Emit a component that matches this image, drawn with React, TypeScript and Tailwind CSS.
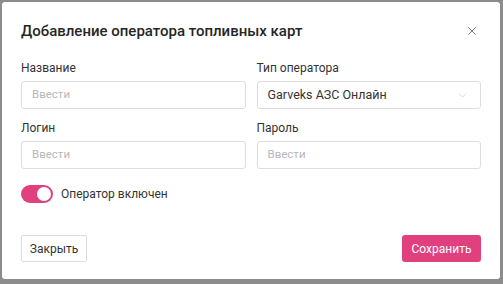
import { X, ChevronDown } from 'lucide-react'

const font = { fontFamily: 'Roboto, "Noto Sans", sans-serif' }

function Field({ label, placeholder, value, select }: { label: string; placeholder?: string; value?: string; select?: boolean }) {
  return (
    <div className="flex flex-col">
      <label className="text-[12px] leading-[18px] text-[#333333]">{label}</label>
      <div className="mt-[4px] h-[28px] rounded-[3px] border border-[#dedede] bg-white flex items-center justify-between pl-[10px] pr-[11px]">
        {value ? (
          <span className="text-[12.5px] text-[#333333]">{value}</span>
        ) : (
          <span className="text-[11.5px] text-[#b8b8b8]">{placeholder}</span>
        )}
        {select && <ChevronDown size={13} strokeWidth={1.1} className="text-[#bdbdbd]" />}
      </div>
    </div>
  )
}

export default function App() {
  return (
    <div className="w-[503px] h-[284px] bg-[#8c8c8c] pt-[2px] pl-[2px]" style={font}>
      <div className="w-[498px] h-[277px] bg-white rounded-[3px] px-[19px]">
        <div className="pt-[19px] flex items-center justify-between">
          <h2 className="text-[15px] leading-[20px] font-medium text-[#262626]">Добавление оператора топливных карт</h2>
          <X size={14} strokeWidth={1.4} className="text-[#5c5c5c] mr-[2px]" />
        </div>

        <div className="mt-[18px] grid grid-cols-2 gap-x-[11px] gap-y-[10px] w-[460px]">
          <Field label="Название" placeholder="Ввести" />
          <Field label="Тип оператора" value="Garveks АЗС Онлайн" select />
          <Field label="Логин" placeholder="Ввести" />
          <Field label="Пароль" placeholder="Ввести" />
        </div>

        <div className="mt-[16px] flex items-center gap-[8px]">
          <div className="w-[32px] h-[18px] rounded-full bg-[#e0407e] flex items-center justify-end pr-[2px]">
            <div className="w-[14px] h-[14px] rounded-full bg-white" />
          </div>
          <span className="text-[12px] text-[#333333]">Оператор включен</span>
        </div>

        <div className="mt-[32px] flex items-center justify-between w-[460px]">
          <button className="h-[27px] w-[66px] rounded-[2px] border border-[#dedede] bg-white text-[12px] text-[#333333]">Закрыть</button>
          <button className="h-[27px] w-[79px] rounded-[3px] bg-[#e0407e] text-[12px] text-white">Сохранить</button>
        </div>
      </div>
    </div>
  )
}
